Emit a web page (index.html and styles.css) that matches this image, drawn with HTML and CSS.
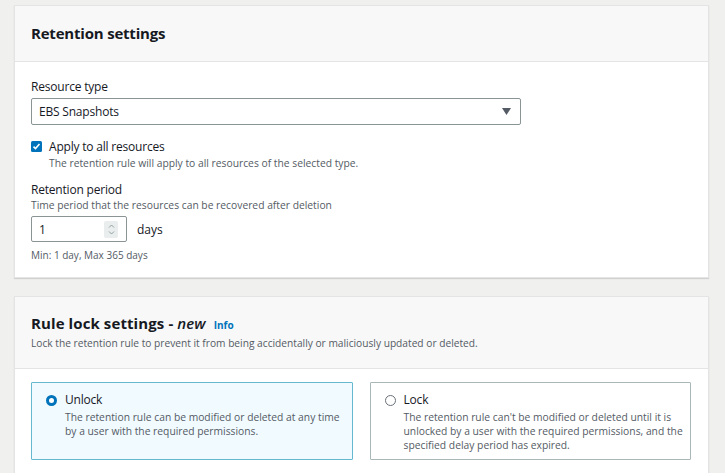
FILE: index.html
```html
<!DOCTYPE html>
<html>
<head>
<meta charset="utf-8">
<link rel="stylesheet" href="styles.css">
</head>
<body>
<div class="page">
  <section class="card card-retention">
    <header class="card-head">
      <h2 class="card-title">Retention settings</h2>
    </header>
    <div class="card-body">
      <div class="field">
        <div class="label">Resource type</div>
        <div class="select">
          <span>EBS Snapshots</span>
          <svg class="caret" width="9" height="7" viewBox="0 0 9 7"><path d="M0 0h9L4.5 7z" fill="#545b64"/></svg>
        </div>
      </div>
      <div class="check-row">
        <span class="checkbox">
          <svg width="11" height="11" viewBox="0 0 11 11"><rect width="11" height="11" rx="1.5" fill="#0073bb"/><path d="M2.5 5.6l2 2 4-4.6" stroke="#fff" stroke-width="1.6" fill="none"/></svg>
        </span>
        <div>
          <div class="check-label">Apply to all resources</div>
          <div class="desc">The retention rule will apply to all resources of the selected type.</div>
        </div>
      </div>
      <div class="field field-period">
        <div class="label">Retention period</div>
        <div class="desc">Time period that the resources can be recovered after deletion</div>
        <div class="period-row">
          <div class="number">
            <span>1</span>
            <span class="spinner">
              <svg width="9" height="13" viewBox="0 0 9 13"><path d="M2 4.5l2.5-2.5 2.5 2.5M2 8.5l2.5 2.5 2.5-2.5" stroke="#879596" stroke-width="0.9" fill="none"/></svg>
            </span>
          </div>
          <span class="unit">days</span>
        </div>
        <div class="hint">Min: 1 day, Max 365 days</div>
      </div>
    </div>
  </section>

  <section class="card card-lock">
    <header class="card-head card-head-lock">
      <h2 class="card-title">Rule lock settings - <em>new</em> <a class="info">Info</a></h2>
      <div class="head-desc">Lock the retention rule to prevent it from being accidentally or maliciously updated or deleted.</div>
    </header>
    <div class="card-body tiles">
      <div class="tile tile-selected">
        <span class="radio radio-on"></span>
        <div>
          <div class="tile-title">Unlock</div>
          <div class="tile-desc">The retention rule can be modified or deleted at any time by a user with the required permissions.</div>
        </div>
      </div>
      <div class="tile">
        <span class="radio"></span>
        <div>
          <div class="tile-title">Lock</div>
          <div class="tile-desc">The retention rule can't be modified or deleted until it is unlocked by a user with the required permissions, and the specified delay period has expired.</div>
        </div>
      </div>
    </div>
  </section>
</div>
</body>
</html>
```

FILE: styles.css
```css
html, body {
  margin: 0;
  padding: 0;
  background: #f0f0ef;
  font-family: "Open Sans", "Liberation Sans", sans-serif;
  color: #16191f;
}

.page {
  padding: 5px 16px 0 14px;
  display: flex;
  flex-direction: column;
  gap: 18px;
  height: 473px;
  overflow: hidden;
  box-sizing: border-box;
}

.card {
  background: #fff;
  border: 1px solid #e4e4e4;
  box-shadow: 0 1px 1px rgba(0,0,0,0.12);
}

.card-head {
  background: #f8f8f8;
  border-bottom: 1px solid #e4e4e4;
  height: 56px;
  box-sizing: border-box;
  padding: 17px 0 0 16px;
}

.card-head-lock {
  height: 72px;
  padding-top: 16px;
}

.card-title {
  margin: 0;
  font-size: 15px;
  font-weight: 700;
  line-height: 21px;
  letter-spacing: -0.2px;
}

.card-head-lock .card-title {
  letter-spacing: 0.1px;
}

.card-title em {
  font-weight: 600;
  font-style: italic;
}

.info {
  color: #0073bb;
  font-size: 10px;
  font-weight: 700;
  margin-left: 4px;
  letter-spacing: 0;
}

.head-desc {
  font-size: 10.2px;
  color: #545b64;
  margin-top: 0;
}

.card-body {
  padding: 17px 17px 15px 16px;
}

.label {
  font-size: 12px;
  line-height: 16px;
  letter-spacing: -0.2px;
}

.select {
  margin-top: 3px;
  width: 490px;
  height: 27px;
  box-sizing: border-box;
  border: 1px solid #8a9494;
  border-radius: 2px;
  display: flex;
  align-items: center;
  justify-content: space-between;
  padding: 0 9px 0 7px;
  font-size: 12px;
  letter-spacing: -0.2px;
}

.check-row {
  display: flex;
  gap: 7px;
  margin-top: 15px;
}

.checkbox {
  padding-top: 1px;
  line-height: 0;
}

.check-label {
  font-size: 12px;
  line-height: 14px;
  letter-spacing: -0.2px;
}

.desc {
  font-size: 10.3px;
  line-height: 14px;
  color: #545b64;
}

.check-row .desc {
  margin-top: 2px;
}

.field-period {
  margin-top: 12px;
}

.period-row {
  display: flex;
  align-items: center;
  gap: 10px;
  margin-top: 4px;
}

.number {
  width: 96px;
  height: 26px;
  box-sizing: border-box;
  border: 1px solid #8a9494;
  border-radius: 2px;
  display: flex;
  align-items: center;
  justify-content: space-between;
  padding: 0 8px 0 7px;
  font-size: 12px;
}

.spinner {
  width: 14px;
  height: 17px;
  background: #eaeded;
  border-radius: 2px;
  display: flex;
  align-items: center;
  justify-content: center;
}

.unit {
  font-size: 12px;
}

.hint {
  font-size: 10px;
  color: #545b64;
  margin-top: 6px;
}

.tiles {
  display: flex;
  gap: 17px;
  padding-top: 13px;
}

.tile {
  width: 322px;
  height: 78px;
  box-sizing: border-box;
  border: 1px solid #aab7b8;
  border-radius: 1px;
  display: flex;
  gap: 8px;
  padding: 9px 2px 0 14px;
}

.tile-selected {
  background: #f1faff;
  border-color: #64b9cf;
}

.radio {
  width: 11px;
  height: 11px;
  border: 1px solid #687078;
  border-radius: 50%;
  box-sizing: border-box;
  margin-top: 3px;
  flex: none;
}

.radio-on {
  border: 3px solid #0073bb;
  background: #fff;
}

.tile-title {
  font-size: 12px;
  line-height: 16px;
  letter-spacing: -0.2px;
}

.tile-desc {
  font-size: 10.3px;
  line-height: 14px;
  color: #545b64;
  margin-top: 2px;
}
```
